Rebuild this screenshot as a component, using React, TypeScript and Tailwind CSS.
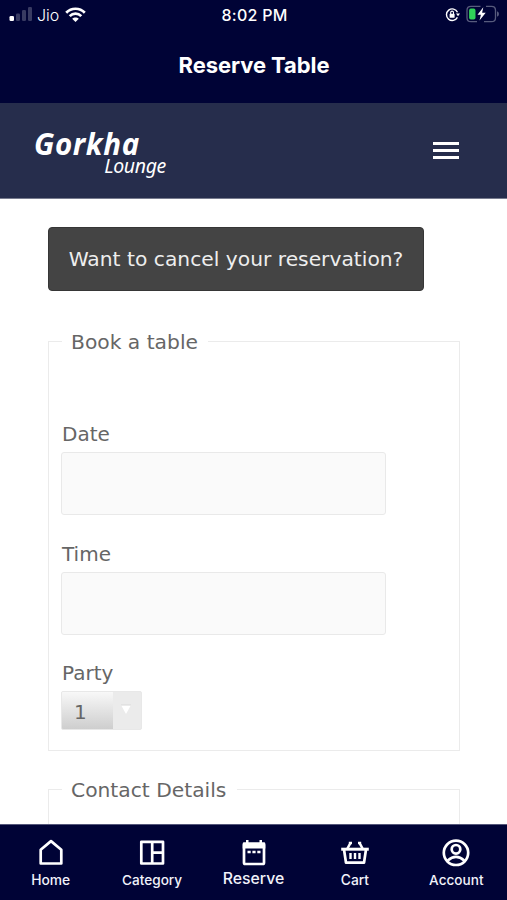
import type { ReactNode } from "react";

function StatusBar() {
  return (
    <div className="grid h-[30px] grid-cols-3 items-center text-white">
      <div className="flex items-center pl-[9px]">
        <svg width="24" height="16" viewBox="0 0 24 16" fill="#fff">
          <rect x="0.5" y="9" width="4.5" height="5" rx="1.3" />
          <g opacity="0.22">
            <rect x="7" y="6.5" width="4" height="7.5" rx="1.2" />
            <rect x="13" y="3" width="4" height="11" rx="1.2" />
            <rect x="19" y="0" width="4" height="14" rx="1.2" />
          </g>
        </svg>
        <span className="ml-[4px] w-[23px] text-[16px] leading-[20px] font-light whitespace-nowrap">Jio</span>
        <svg className="mb-[1px] ml-[5px]" width="21" height="16" viewBox="0 0 21 16" fill="none" stroke="#fff" strokeWidth="2.7">
          <path d="M1.2 5.7C6.3.4 14.7.4 19.8 5.7" />
          <path d="M4.7 9.1C8 5.8 13 5.8 16.3 9.1" />
          <path d="M7.2 11.8C9 10 12 10 13.8 11.8L10.5 15Z" fill="#fff" stroke="none" />
        </svg>
      </div>
      <div className="pl-[2px] text-center text-[16px] leading-[20px] font-medium tracking-[0.25px]">8:02 PM</div>
      <div className="flex items-center justify-end pr-[8px] pb-[2px]">
        <svg width="15" height="15" viewBox="0 0 15 15" fill="none" stroke="#fff">
          <path d="M12.5 5.2A5.8 5.8 0 1 0 12.4 10.4" strokeWidth="1.4" />
          <path d="M11 6.6h4l-2 2.7Z" fill="#fff" stroke="none" />
          <rect x="4.6" y="6.8" width="5" height="4" rx="0.6" fill="#fff" stroke="none" />
          <path d="M5.7 7V5.5a1.4 1.4 0 0 1 2.8 0V7" strokeWidth="1.1" />
        </svg>
        <svg className="ml-[6px]" width="33" height="18" viewBox="0 0 33 18" fill="none">
          <path d="M14.5 1.3H5Q1 1.3 1 5.3V12.7Q1 16.7 5 16.7H11M18 16.7H25.5Q29.5 16.7 29.5 12.7V5.3Q29.5 1.3 25.5 1.3H20" stroke="#575b7d" strokeWidth="1.3" />
          <path d="M31 6.2Q33 6.8 33 9T31 11.8Z" fill="#575b7d" />
          <rect x="3.1" y="3.6" width="6.4" height="11" rx="1.8" fill="#2fd158" />
          <path d="M17.3 2.3L11.5 9.8H14.9L13.5 15.5L19.7 7.7H16.1Z" fill="#fff" />
        </svg>
      </div>
    </div>
  );
}

function Fieldset({ title, titleClass, className, children }: { title: string; titleClass: string; className: string; children?: ReactNode }) {
  return (
    <fieldset className={`w-[412px] border border-[#ebebeb] pl-[13px] ${className}`}>
      <legend className={`h-[28px] pl-[9px] text-[20.25px] leading-[30px] whitespace-nowrap ${titleClass}`}>{title}</legend>
      {children}
    </fieldset>
  );
}

function Field({ label }: { label: string }) {
  return (
    <label className="mb-[26px] block">
      <span className="block h-[31px] text-[20px] leading-[26px]">{label}</span>
      <input readOnly className="-ml-px block h-[63px] w-[325px] rounded-[3px] border border-[#e9e9e9] bg-[#fafafa]" />
    </label>
  );
}

function NavItem({ label, labelClass, children }: { label: string; labelClass: string; children: ReactNode }) {
  return (
    <a className="flex flex-1 flex-col items-center pt-[13px] text-[#f1f2fa]">
      <svg width="30" height="30" viewBox="0 0 30 30" fill="none" stroke="#fff" strokeWidth="2.7">{children}</svg>
      <span className={`font-medium whitespace-nowrap ${labelClass}`}>{label}</span>
    </a>
  );
}

export default function App() {
  return (
    <div className="flex h-[900px] w-[507px] flex-col overflow-hidden bg-white font-['Inter',sans-serif]">
      <header className="h-[103px] shrink-0 bg-[#000336]">
        <StatusBar />
        <h1 className="pt-[21px] pl-px text-center text-[22px] leading-[28px] font-bold tracking-[-0.08px] text-white">Reserve Table</h1>
      </header>

      <div className="flex h-[96px] shrink-0 items-start justify-between border-b border-[#777b8e] bg-[#262d4c] pr-[48px] pl-[34px] text-white">
        <div className="w-[133px] pt-[29px] font-['Noto_Sans',sans-serif] italic">
          <div className="text-[29.5px] leading-[24px] font-bold tracking-[0.6px] whitespace-nowrap">Gorkha</div>
          <div className="pt-px pr-px text-right text-[19.5px] leading-[18px] tracking-[-0.35px]">Lounge</div>
        </div>
        <div className="mt-[39px] flex w-[26px] flex-col gap-[4px]">
          <i className="h-[3px] bg-white" />
          <i className="h-[3px] bg-white" />
          <i className="h-[3px] bg-white" />
        </div>
      </div>

      <main className="min-h-0 flex-1 overflow-hidden pt-[28px] pl-[48px] font-['DejaVu_Sans',sans-serif] text-[#666]">
        <button className="block h-[64px] w-[376px] rounded-[4px] border border-[#363636] bg-[#444] text-center text-[20.25px] whitespace-nowrap text-[#eee]">
          Want to cancel your reservation?
        </button>
        <Fieldset title="Book a table" titleClass="w-[146px]" className="mt-[36px] h-[424px]">
          <div className="pt-[66px]">
            <Field label="Date" />
            <Field label="Time" />
            <div className="h-[30px] text-[20px] leading-[25px]">Party</div>
            <div className="-ml-px flex h-[39px] w-[81px] overflow-hidden rounded-[2px] border border-[#e8e8e8] bg-[#ebebeb]">
              <div className="w-[51px] bg-linear-to-b from-[#f8f8f8] to-[#cecece] pl-[12px] text-[20px] leading-[40px]">1</div>
              <svg className="mt-[11px] ml-[7px]" width="12" height="13" viewBox="0 0 12 13">
                <path d="M1 2H11L6 11Z" fill="#fff" />
                <path d="M1 2H11" stroke="#d8d8d8" />
              </svg>
            </div>
          </div>
        </Fieldset>
        <Fieldset title="Contact Details" titleClass="w-[175px]" className="mt-[24px] h-[100px]" />
      </main>

      <nav className="flex h-[76px] shrink-0 border-t border-[#55577a] bg-[#000336]">
        <NavItem label="Home" labelClass="text-[13.8px] leading-[24px]">
          <path d="M4.7 11.7L15 3.1L25.3 11.7V25.5H4.7Z" strokeLinejoin="round" />
        </NavItem>
        <NavItem label="Category" labelClass="text-[13.6px] leading-[24px]">
          <path d="M4.3 3.8H26V25.5H4.3ZM15.2 3.8V25.5M15.2 14.7H26" strokeLinejoin="round" />
        </NavItem>
        <NavItem label="Reserve" labelClass="text-[15.8px] leading-[22px]">
          <path d="M5 7.5H25V24.8Q25 26 23.8 26H6.2Q5 26 5 24.8Z" />
          <path d="M3.7 5.5Q3.7 4.2 5 4.2H7V2H9.5V4.2H20.5V2H23V4.2H25Q26.3 4.2 26.3 5.5V10.5H3.7Z" fill="#fff" stroke="none" />
          <path d="M8.5 14h3.2M13.4 14h3.2M18.3 14h3.2" />
        </NavItem>
        <NavItem label="Cart" labelClass="text-[13.8px] leading-[24px]">
          <path d="M4 11.5L6 24.7H24L26 11.5" strokeLinejoin="round" />
          <path d="M1.2 11.2H28.8" strokeWidth="3" />
          <path d="M7.2 11L10.5 4.8M22.8 11L19.5 4.8M8.8 4.9H12M18 4.9H21.2" strokeWidth="2.5" />
          <path d="M10.5 15V21M15 15V21M19.5 15V21" strokeWidth="2.4" />
        </NavItem>
        <NavItem label="Account" labelClass="text-[13.6px] leading-[24px]">
          <circle cx="15" cy="14.8" r="12.2" />
          <circle cx="15" cy="11.3" r="4.3" />
          <path d="M6.8 22.5Q10.8 18.8 15 18.8T23.2 22.5" />
        </NavItem>
      </nav>
    </div>
  );
}
